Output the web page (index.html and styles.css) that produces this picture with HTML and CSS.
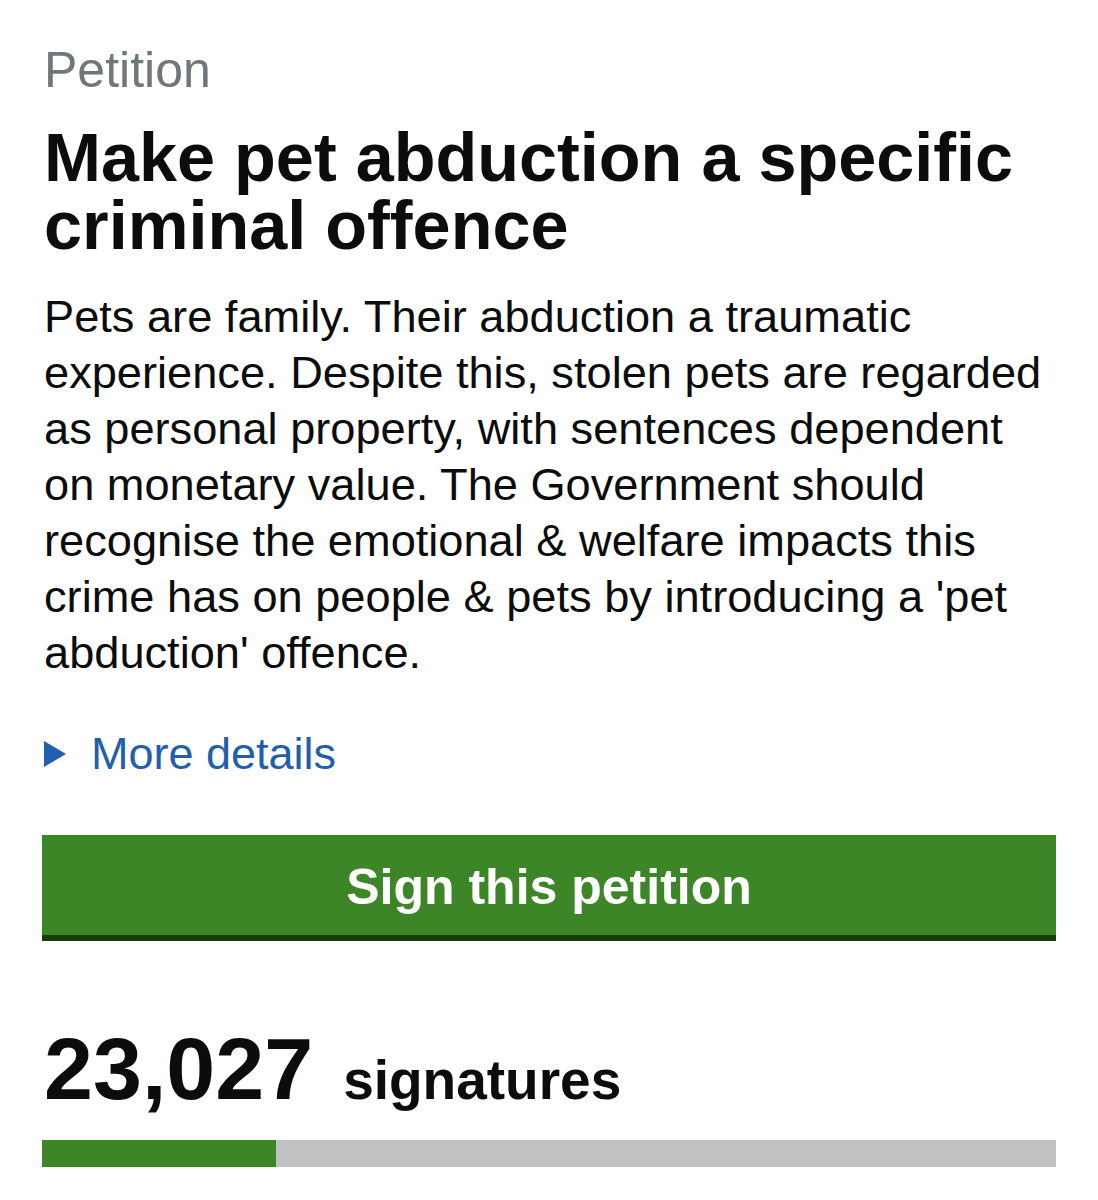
FILE: index.html
```html
<!DOCTYPE html>
<html lang="en">
<head>
<meta charset="utf-8">
<title>Petition</title>
<link rel="stylesheet" href="styles.css">
</head>
<body>
<main class="page">
  <p class="caption">Petition</p>
  <h1 class="title">Make pet abduction a specific criminal offence</h1>
  <p class="summary">Pets are family. Their abduction a traumatic experience. Despite this, stolen pets are regarded as personal property, with sentences dependent on monetary value. The Government should recognise the emotional &amp; welfare impacts this crime has on people &amp; pets by introducing a 'pet abduction' offence.</p>
  <div class="details">
    <span class="details-arrow"></span>
    <span class="details-label">More details</span>
  </div>
  <button class="sign-button" type="button">Sign this petition</button>
  <div class="count">
    <span class="count-number">23,027</span>
    <span class="count-label">signatures</span>
  </div>
  <div class="progress"><div class="progress-fill" style="width: 23.03%"></div></div>
</main>
</body>
</html>
```

FILE: styles.css
```css
html, body {
  margin: 0;
  padding: 0;
  background: #ffffff;
}

body {
  font-family: "Liberation Sans", Arial, Helvetica, sans-serif;
  color: #0b0c0c;
}

.page {
  padding: 40px 42px 0 42px;
  display: flex;
  flex-direction: column;
}

.caption {
  margin: 0 0 0 2px;
  font-size: 50px;
  line-height: 60px;
  color: #6f777b;
}

.title {
  margin: 23px 0 0 2px;
  font-size: 68.4px;
  line-height: 68px;
  font-weight: 700;
}

.summary {
  margin: 30px 0 0 2px;
  font-size: 45.2px;
  line-height: 56px;
}

.details {
  margin: 45px 0 0 2px;
  display: flex;
  align-items: center;
  gap: 25px;
  height: 56px;
}

.details-arrow {
  width: 0;
  height: 0;
  border-top: 13px solid transparent;
  border-bottom: 13px solid transparent;
  border-left: 22px solid #1f5fad;
}

.details-label {
  font-size: 45px;
  line-height: 56px;
  color: #1f5fad;
}

.sign-button {
  margin: 53px 0 0 0;
  width: 100%;
  height: 106px;
  padding: 0 0 1px 0;
  border: 0;
  border-radius: 0;
  background: #3d8628;
  box-shadow: inset 0 -6px 0 #183d0b;
  color: #ffffff;
  font-family: "Liberation Sans", Arial, Helvetica, sans-serif;
  font-size: 50px;
  font-weight: 700;
  line-height: 105px;
  cursor: pointer;
}

.count {
  margin: 78px 0 0 2px;
  display: flex;
  align-items: baseline;
  gap: 30px;
  line-height: 100px;
}

.count-number {
  font-size: 88px;
  font-weight: 700;
}

.count-label {
  font-size: 55px;
  font-weight: 700;
}

.progress {
  margin-top: 10px;
  height: 27px;
  background: #bfc1c3;
}

.progress-fill {
  height: 100%;
  background: #3d8628;
}
```
